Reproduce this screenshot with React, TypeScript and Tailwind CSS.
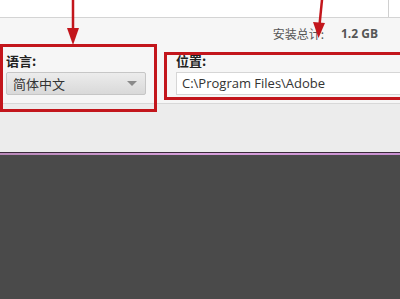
export default function App() {
  return (
    <div className="relative flex h-[299px] w-[400px] flex-col overflow-hidden bg-[#4a4a4a] font-['Open_Sans','Noto_Sans_CJK_SC',sans-serif] text-[#333]">
      <div className="flex h-[18px] shrink-0 justify-end border-b border-[#d4d4d4] bg-white">
        <div className="w-[12px] border-l border-[#d0d0d0]" />
      </div>

      <div className="flex h-[86px] shrink-0 flex-col border-b border-[#d8d8d8] bg-[#f6f6f6]">
        <div className="mt-[8px] flex justify-end gap-[17px] pr-[22px] text-[12px] leading-[16px] text-[#555]">
          <span className="font-['Noto_Sans_CJK_SC',sans-serif]">安装总计:</span>
          <span className="font-bold">1.2 GB</span>
        </div>

        <div className="mt-[10px] flex gap-[30px] pl-[6px]">
          <div className="flex w-[140px] flex-col gap-[2px]">
            <span className="font-['Noto_Sans_CJK_SC',sans-serif] text-[13px] font-bold leading-[18px] text-[#222]">
              语言:
            </span>
            <div className="flex h-[23px] items-center justify-between rounded-[2px] border border-[#c6c6c6] bg-gradient-to-b from-[#ececec] to-[#d9d9d9] pl-[6px] pr-[8px]">
              <span className="font-['Noto_Sans_CJK_SC',sans-serif] text-[13px] text-[#333]">简体中文</span>
              <span className="h-0 w-0 border-x-[5px] border-t-[5px] border-x-transparent border-t-[#8a8a8a]" />
            </div>
          </div>

          <div className="flex flex-1 flex-col gap-[2px]">
            <span className="font-['Noto_Sans_CJK_SC',sans-serif] text-[13px] font-bold leading-[18px] text-[#222]">
              位置:
            </span>
            <div className="flex h-[23px] items-center border border-r-0 border-[#d6d6d6] bg-white pl-[5px] text-[13px] text-[#333]">
              C:\Program Files\Adobe
            </div>
          </div>
        </div>
      </div>

      <div className="h-[48px] shrink-0 bg-[#ececec]" />
      <div className="h-px shrink-0 bg-[#3b2b3b]" />
      <div className="h-[2px] shrink-0 bg-gradient-to-r from-[#b888b8] via-[#d8a0dc] to-[#c890d0]" />
      <div className="flex-1 bg-[#4a4a4a]" />

      <svg className="pointer-events-none absolute inset-0" width="400" height="299" viewBox="0 0 400 299">
        <rect x="1.5" y="45.5" width="154" height="65" fill="none" stroke="#c3161c" strokeWidth="3" />
        <rect x="165.5" y="53.5" width="250" height="45" fill="none" stroke="#c3161c" strokeWidth="3" />
        <line x1="73" y1="0" x2="73" y2="30" stroke="#c3161c" strokeWidth="2.5" />
        <polygon points="67,28 79,28 73,45" fill="#c3161c" />
        <line x1="322" y1="0" x2="319.5" y2="25" stroke="#c3161c" strokeWidth="2.5" />
        <polygon points="313,22 325,23 318.5,38" fill="#c3161c" />
      </svg>
    </div>
  );
}
